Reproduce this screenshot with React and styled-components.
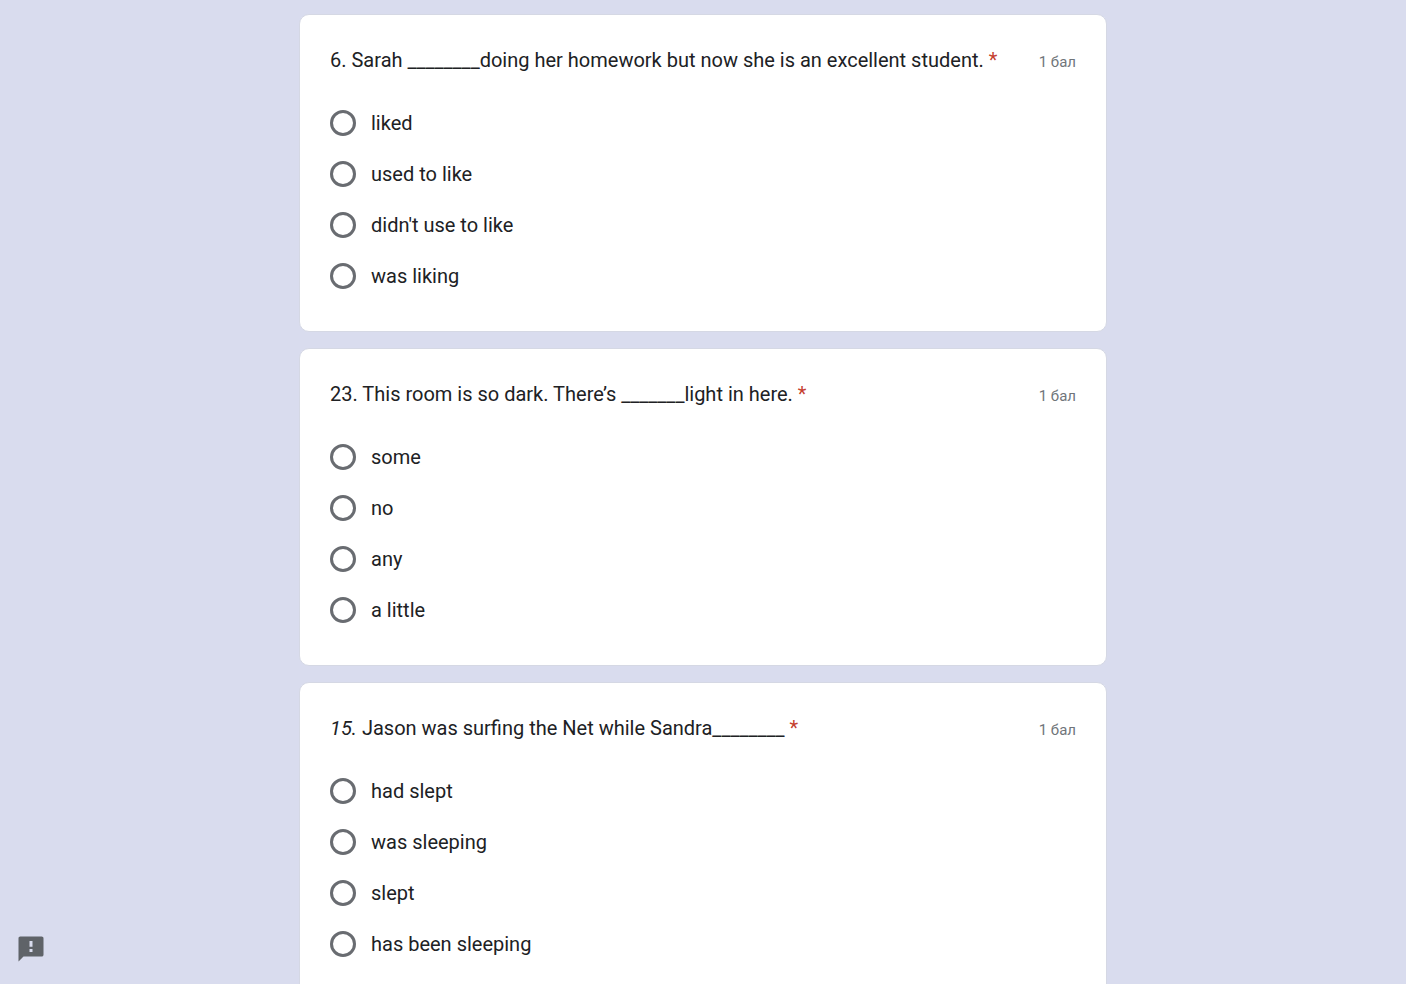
import React from 'react'
import styled, { createGlobalStyle } from 'styled-components'

const colors = {
  page: '#d9dcee',
  border: '#d5d8e4',
  text: '#202124',
  muted: '#70757a',
  icon: '#5f6368',
  ring: '#696c71',
  required: '#c5402f',
}

const GlobalStyle = createGlobalStyle`
  html {
    scrollbar-width: none;
  }

  body {
    margin: 0;
    background: ${colors.page};
    color: ${colors.text};
    font-family: Roboto, Arial, sans-serif;
    font-size: 20px;
  }
`

const Page = styled.main`
  padding: 14px 16px;
`

const Form = styled.form`
  display: flex;
  flex-direction: column;
  gap: 16px;
  max-width: 808px;
  margin: 0 auto;
`

const Card = styled.section`
  box-sizing: border-box;
  padding: 30px 30px 42px;
  background: #fff;
  border: 1px solid ${colors.border};
  border-radius: 10px;
`

const Header = styled.div`
  display: flex;
  justify-content: space-between;
  gap: 20px;
  margin-bottom: 33px;
  line-height: 30px;
`

const Title = styled.h2`
  margin: 0;
  font-size: 20px;
  font-weight: 400;
`

const Required = styled.span`
  color: ${colors.required};
`

const Points = styled.span`
  flex-shrink: 0;
  padding-top: 2px;
  color: ${colors.muted};
  font-size: 15px;
`

const Options = styled.div`
  display: flex;
  flex-direction: column;
  gap: 25px;
`

const Option = styled.label`
  display: flex;
  align-items: center;
  gap: 15px;
  line-height: 26px;
  cursor: pointer;
`

const Radio = styled.input`
  appearance: none;
  box-sizing: border-box;
  flex-shrink: 0;
  width: 26px;
  height: 26px;
  margin: 0;
  border: 3px solid ${colors.ring};
  border-radius: 50%;

  &:checked {
    background: radial-gradient(${colors.ring} 45%, transparent 50%);
  }
`

const ReportButton = styled.button`
  position: fixed;
  left: 16px;
  bottom: 20px;
  display: flex;
  padding: 0;
  border: 0;
  background: none;
  color: ${colors.icon};
  cursor: pointer;
`

const questions = [
  {
    number: '6.',
    text: 'Sarah ________doing her homework but now she is an excellent student.',
    options: ['liked', 'used to like', "didn't use to like", 'was liking'],
  },
  {
    number: '23.',
    text: 'This room is so dark. There’s _______light in here.',
    options: ['some', 'no', 'any', 'a little'],
  },
  {
    number: <em>15.</em>,
    text: 'Jason was surfing the Net while Sandra________',
    options: ['had slept', 'was sleeping', 'slept', 'has been sleeping'],
  },
]

function Question({ id, number, text, options }) {
  return (
    <Card role="radiogroup" aria-labelledby={`${id}-title`}>
      <Header>
        <Title id={`${id}-title`}>
          {number} {text} <Required>*</Required>
        </Title>
        <Points>1 бал</Points>
      </Header>
      <Options>
        {options.map(option => (
          <Option key={option}>
            <Radio type="radio" name={id} value={option} />
            {option}
          </Option>
        ))}
      </Options>
    </Card>
  )
}

export default function App() {
  return (
    <Page>
      <GlobalStyle />
      <Form>
        {questions.map((question, index) => (
          <Question key={index} id={`question-${index}`} {...question} />
        ))}
      </Form>
      <ReportButton type="button" aria-label="Report a problem">
        <svg width="30" height="30" viewBox="0 0 24 24" fill="currentColor">
          <path d="M20.5 2H3.4C2.6 2 2 2.6 2 3.4V22l4-4h14.5c.9 0 1.5-.6 1.5-1.5v-13c0-.9-.6-1.5-1.5-1.5zm-7.3 12.4h-2.4V12h2.4v2.4zm0-4.2h-2.4V5.6h2.4v4.6z" />
        </svg>
      </ReportButton>
    </Page>
  )
}
